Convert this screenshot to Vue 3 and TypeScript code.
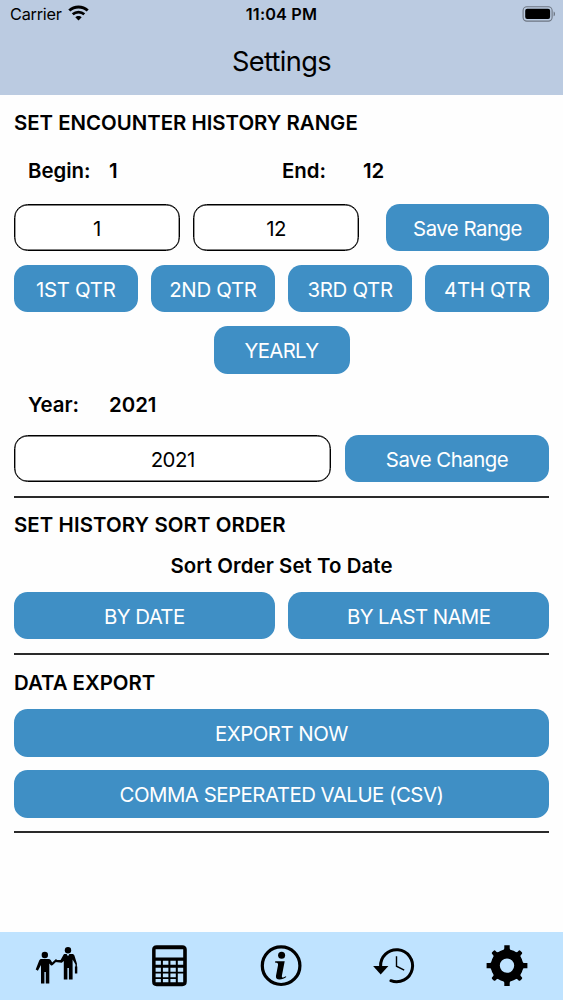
<script setup lang="ts">
import { ref } from 'vue'

const begin = ref('1')
const end = ref('12')
const year = ref('2021')
const sortOrder = ref('Date')
const quarters: string[] = ['1ST QTR', '2ND QTR', '3RD QTR', '4TH QTR']
const mainTeeth: number[] = [0, 90, 180, 270]
const diagonalTeeth: number[] = [45, 135, 225, 315]
</script>

<template>
  <div class="screen">
    <header class="header">
      <div class="status">
        <div class="carrier">
          <span class="carrier-name">Carrier</span>
          <svg class="wifi" width="21" height="16" viewBox="0 0 21 16">
            <path d="M1.300 5.500C6.500.8 14.500.8 19.700 5.500" fill="none" stroke="#000" stroke-width="3" />
            <path d="M4.700 9.200C8 6.300 13 6.300 16.300 9.200" fill="none" stroke="#000" stroke-width="2.700" />
            <path d="M10.500 15.500 7.300 12.300C9 10.500 12 10.500 13.700 12.300Z" />
          </svg>
        </div>
        <span class="time">11:04 PM</span>
        <svg class="battery" width="34" height="16" viewBox="0 0 34 16">
          <rect x="1.100" y=".7" width="29" height="14.400" rx="3.800" fill="none" stroke="#6d7682" stroke-width="1.100" />
          <rect x="3.200" y="2.700" width="24.900" height="10.300" rx="2" />
          <path d="M31.600 5.500c1.900.6 1.900 4.200 0 4.800z" fill="#6d7682" />
        </svg>
      </div>
      <h1 class="title">Settings</h1>
    </header>

    <main class="content">
      <h2 class="heading range-heading">SET ENCOUNTER HISTORY RANGE</h2>
      <div class="labels range-labels">
        <span class="key">Begin:</span><span class="begin-value">{{ begin }}</span>
        <span class="end-key">End:</span><span>{{ end }}</span>
      </div>
      <div class="row range-row">
        <input v-model="begin" class="field" />
        <input v-model="end" class="field" />
        <button class="btn save-range">Save Range</button>
      </div>
      <div class="row quarters">
        <button v-for="q in quarters" :key="q" class="btn">{{ q }}</button>
      </div>
      <button class="btn yearly">YEARLY</button>
      <div class="labels year-labels">
        <span class="key">Year:</span><span>{{ year }}</span>
      </div>
      <div class="row">
        <input v-model="year" class="field" />
        <button class="btn save-change">Save Change</button>
      </div>
      <hr class="rule" />

      <h2 class="heading sort-heading">SET HISTORY SORT ORDER</h2>
      <p class="sort-state">Sort Order Set To {{ sortOrder }}</p>
      <div class="row">
        <button class="btn by-date">BY DATE</button>
        <button class="btn by-name">BY LAST NAME</button>
      </div>
      <hr class="rule" />

      <h2 class="heading export-heading">DATA EXPORT</h2>
      <div class="stack">
        <button class="btn export-now">EXPORT NOW</button>
        <button class="btn csv">COMMA SEPERATED VALUE (CSV)</button>
      </div>
      <hr class="rule" />
    </main>

    <nav class="tabs">
      <a class="tab" aria-label="Encounters">
        <svg width="44" height="44" viewBox="0 0 44 44">
          <circle cx="10.800" cy="11" r="3.200" />
          <path d="M7.300 14.900h7.200c1 0 1.700.4 2.200 1.200l1.500 2.400 3.800-3.600 1.500 1.600-4.700 4.600c-.8.7-1.600.6-2.200-.1l-1.300-1.500V39.500h-3.500V28h-1.400v11.500H7V21L3.900 26.700 1.700 25.500 5.200 16.600c.4-1.100 1.100-1.700 2.100-1.700Z" />
          <circle cx="34" cy="6.200" r="3.200" />
          <path d="M30.300 10h2.300l1.400 2.200 1.400-2.200h2.700c1.300 0 2 .7 2.400 1.700l2.400 7.700v3h.4v7h-2.400v-7h.6v-1.800l-2.900-5.200V35.400h-3.700V24h-1.500v11.400h-3.600V17l-2 1.800-6.600-.7.200-2.200 5.200.2 2.500-4.500c.4-.9.700-1.300 1.200-1.600Z" />
        </svg>
      </a>
      <a class="tab" aria-label="Calculator">
        <svg width="44" height="44" viewBox="0 0 44 44">
          <path fill-rule="evenodd" d="M9.700 1.200H35.200Q39.800 1.200 39.800 5.800V37.600Q39.800 42.200 35.200 42.200H9.700Q5.100 42.200 5.100 37.600V5.800Q5.100 1.200 9.700 1.200Z
            M8.600 5.200V13.400H36.200V5.200Z
            M8.600 16.800v4h5.300v-4z M15.900 16.800v4h5.500v-4z M23.400 16.800v4h5.400v-4z M30.800 16.800v4h5.400v-4z
            M8.600 23.800v4h5.300v-4z M15.900 23.800v4h5.500v-4z M23.400 23.800v4h5.400v-4z M30.800 23.800v4h5.400v-4z
            M8.600 29.600v3.600h5.300v-3.600z M15.900 29.600v3.600h5.500v-3.600z M23.400 29.600v3.600h5.400v-3.600z M30.800 29.600v8.700h5.400v-8.700z
            M8.600 35v3.300h5.300v-3.300z M15.900 35v3.300h5.500v-3.300z M23.400 35v3.300h5.400v-3.300z" />
        </svg>
      </a>
      <a class="tab" aria-label="Information">
        <svg width="44" height="44" viewBox="0 0 44 44">
          <circle cx="22.100" cy="21.700" r="18.800" fill="none" stroke="#000" stroke-width="3.200" />
          <circle cx="22.600" cy="11.300" r="3.500" />
          <path d="M16.200 17.200h9.500L22.900 31.800c-.2 1.400.2 1.900 1.300 1.700l2.700-1.200.4.800c-1.900 1.500-4.300 2.500-6.700 2.500-3 0-4-1.500-3.600-3.800l2-10.500c.3-1.900-.4-2.500-2.800-2.500Z" />
        </svg>
      </a>
      <a class="tab" aria-label="History">
        <svg width="44" height="44" viewBox="0 0 44 44">
          <path d="M8.600 22.500A16 16 0 1 1 18.900 36.700" fill="none" stroke="#000" stroke-width="3" stroke-linecap="round" />
          <path d="M1.100 22.100H16.400L8.700 30.500Z" />
          <path d="M24.500 12.200V22.200L32.200 26.200" fill="none" stroke="#000" stroke-width="1.400" />
        </svg>
      </a>
      <a class="tab" aria-label="Settings">
        <svg width="44" height="44" viewBox="0 0 44 44">
          <circle cx="22" cy="21.600" r="11.700" fill="none" stroke="#000" stroke-width="9" />
          <path v-for="a in mainTeeth" :key="a" :transform="`rotate(${a} 22 21.600)`" d="M14.800 7.600Q19.300 6.600 19.300 4.300V1.200H24.700V4.300Q24.700 6.600 29.200 7.600L22 10Z" />
          <path v-for="a in diagonalTeeth" :key="a" :transform="`rotate(${a} 22 21.600)`" d="M15.500 7.400Q19.700 6.500 19.700 4.200V2.900Q19.700 1.700 20.900 1.700H23.100Q24.300 1.700 24.300 2.900V4.200Q24.300 6.500 28.500 7.400L22 10Z" />
        </svg>
      </a>
    </nav>
  </div>
</template>

<style>
body {
  margin: 0;
}
</style>

<style scoped>
.screen {
  display: flex;
  flex-direction: column;
  width: 563px;
  height: 1000px;
  background: #fefefe;
  color: #000;
  font-family: Inter, 'Liberation Sans', sans-serif;
  font-size: 20.4px;
  overflow: hidden;
}
.header {
  height: 95px;
  flex: none;
  background: #bbcbe1;
}
.status {
  display: grid;
  grid-template-columns: 1fr auto 1fr;
  align-items: center;
  height: 28px;
  padding: 0 7px 0 10px;
  font-size: 16.3px;
}
.carrier {
  display: flex;
  align-items: center;
  gap: 6px;
}
.carrier-name {
  letter-spacing: -0.25px;
}
.wifi {
  margin-top: -2px;
}
.time {
  margin: 0 3px 0 0;
  font-weight: 600;
  letter-spacing: 0.15px;
}
.battery {
  justify-self: end;
}
.title {
  margin: 0;
  font-size: 27.2px;
  font-weight: 400;
  line-height: 67px;
  letter-spacing: -0.65px;
  text-align: center;
}
.content {
  flex: 1;
  display: flex;
  flex-direction: column;
  padding: 0 14px;
}
.heading {
  margin: 0;
  font-size: 20.4px;
  font-weight: 600;
  white-space: nowrap;
}
.range-heading {
  line-height: 55px;
}
.labels {
  display: flex;
  padding-left: 14px;
  font-weight: 600;
}
.key {
  width: 81px;
}
.range-labels {
  line-height: 41px;
  margin-bottom: 13px;
}
.begin-value {
  width: 173px;
}
.end-key {
  width: 81px;
}
.row {
  display: flex;
  gap: 13.6px;
}
.btn,
.field {
  box-sizing: border-box;
  height: 47.4px;
  margin: 0;
  padding: 1px 0 0;
  border-radius: 13.6px;
  font: inherit;
  letter-spacing: -0.5px;
  text-align: center;
  white-space: nowrap;
}
.btn {
  border: 0;
  background: #3f8fc5;
  color: #fff;
}
.field {
  flex: 1;
  min-width: 0;
  border: 1px solid #000;
  box-shadow: inset 0 0 0 0.4px #000;
  background: #fff;
  color: #000;
}
.save-range {
  width: 163px;
  margin-left: 13.6px;
}
.quarters {
  margin: 13.7px 0;
}
.quarters .btn {
  flex: 1;
  letter-spacing: -0.3px;
}
.yearly {
  align-self: center;
  width: 136px;
  letter-spacing: -0.7px;
}
.year-labels {
  line-height: 61.3px;
}
.save-change {
  width: 204px;
}
.rule {
  width: 100%;
  height: 2px;
  margin: 13.3px 0 0;
  border: 0;
  background: #2a2a2a;
}
.sort-heading {
  line-height: 54px;
  letter-spacing: 0.1px;
}
.sort-state {
  margin: 0 0 13.4px;
  line-height: 27px;
  letter-spacing: 0.08px;
  text-align: center;
  font-weight: 600;
}
.by-date,
.by-name {
  flex: 1;
  letter-spacing: -0.6px;
}
.export-heading {
  line-height: 55.2px;
  margin-bottom: -0.6px;
}
.stack {
  display: flex;
  flex-direction: column;
  gap: 13.6px;
}
.tabs {
  display: grid;
  grid-template-columns: repeat(5, 1fr);
  flex: none;
  height: 68px;
  background: #bfe3ff;
}
.tab {
  display: flex;
  align-items: center;
  justify-content: center;
}
</style>
